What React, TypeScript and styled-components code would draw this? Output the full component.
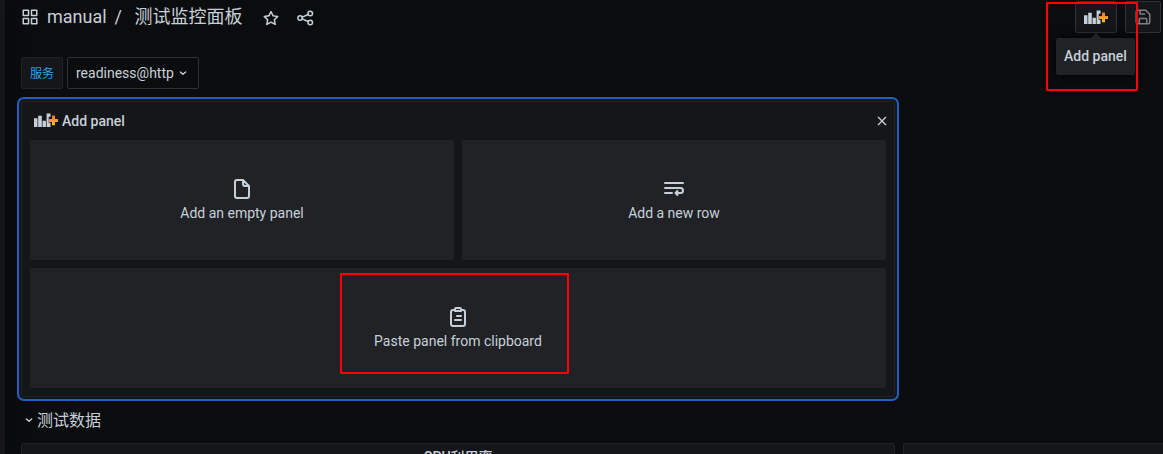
import React from 'react';
import styled, { createGlobalStyle } from 'styled-components';

const GlobalStyle = createGlobalStyle`
  *, *::before, *::after { box-sizing: border-box; }
  body {
    margin: 0;
    background: #0b0c0e;
    color: #c7d0d9;
    font-family: Roboto, "Noto Sans CJK SC", sans-serif;
    font-size: 14px;
    line-height: 20px;
    overflow: hidden;
  }
  button { font: inherit; color: inherit; padding: 0; margin: 0; }
  svg { display: block; flex: none; }
`;

const Page = styled.div`
  position: relative;
  display: flex;
  width: 1163px;
  height: 454px;
  overflow: hidden;
`;

const SideMenu = styled.div`
  flex: none;
  width: 5px;
  background: #141619;
  box-shadow: 0 0 20px #000;
`;

const Main = styled.main`
  flex: 1;
  min-width: 0;
  display: flex;
  flex-direction: column;
  padding-left: 16px;
`;

const NavBar = styled.header`
  flex: none;
  height: 57px;
  display: flex;
  align-items: flex-start;
  padding-right: 2px;
`;

const Breadcrumb = styled.div`
  display: flex;
  align-items: center;
  height: 34px;
  font-size: 18px;
  line-height: 34px;
`;

const Folder = styled.span`
  margin-left: 8px;
`;

const Separator = styled.span`
  width: 20px;
  margin-left: 8px;
`;

const NavIcon = styled.span<{ $left: number }>`
  margin-left: ${(p) => p.$left}px;
  padding-top: 2px;
`;

const Actions = styled.div`
  display: flex;
  gap: 8px;
  margin-left: auto;
`;

const ActionSlot = styled.div`
  position: relative;
`;

const NavButton = styled.button<{ $width: number; $dim?: boolean }>`
  display: flex;
  align-items: center;
  justify-content: center;
  width: ${(p) => p.$width}px;
  height: 32px;
  margin-top: 1px;
  padding-top: ${(p) => (p.$dim ? 0 : 1)}px;
  border: 1px solid #2c3235;
  border-radius: 2px;
  background: #141619;
  color: ${(p) => (p.$dim ? '#7b8087' : '#c7d0d9')};
`;

const Tooltip = styled.div`
  position: absolute;
  top: 38px;
  left: -19px;
  width: 79px;
  height: 37px;
  border-radius: 2px;
  background: #202226;
  box-shadow: 0 0 10px #000;
  font-weight: 500;
  line-height: 36px;
  text-align: center;
  white-space: nowrap;

  &::before {
    content: '';
    position: absolute;
    top: -5px;
    left: 35px;
    border: 5px solid transparent;
    border-top: 0;
    border-bottom-color: #202226;
  }
`;

const Variables = styled.div`
  flex: none;
  display: flex;
  gap: 4px;
  height: 32px;
  margin-bottom: 12px;
`;

const VariableLabel = styled.label`
  width: 42px;
  border: 1px solid #202226;
  border-radius: 2px;
  background: #141619;
  color: #33a2e5;
  font-size: 12px;
  line-height: 32px;
  text-align: center;
`;

const VariableSelect = styled.button`
  display: flex;
  align-items: center;
  gap: 1px;
  width: 132px;
  padding-left: 8px;
  border: 1px solid #2c3235;
  border-radius: 2px;
  background: #0b0c0e;
`;

const AddPanelWidget = styled.section`
  flex: none;
  width: 874px;
  height: 296px;
  border: 1px solid #202226;
  border-radius: 3px;
  background: #141619;
  box-shadow: 0 0 0 2px #141619, 0 0 0 4px #1f60c4;
`;

const WidgetHeader = styled.div`
  display: flex;
  align-items: center;
  height: 38px;
  padding: 0 4px 0 12px;
  font-weight: 500;
`;

const WidgetTitle = styled.span`
  flex: 1;
  margin-left: 4px;
`;

const CardGrid = styled.div`
  display: grid;
  grid-template-columns: 1fr 1fr;
  grid-auto-rows: 120px;
  gap: 8px;
  padding: 0 8px;
`;

const Card = styled.button<{ $wide?: boolean }>`
  grid-column: ${(p) => (p.$wide ? '1 / -1' : 'auto')};
  display: flex;
  flex-direction: column;
  align-items: center;
  padding-top: 37px;
  border: 0;
  border-radius: 2px;
  background: #202226;
`;

const CardLabel = styled.span`
  margin-top: 2px;
`;

const RowHeader = styled.div`
  flex: none;
  display: flex;
  align-items: center;
  height: 46px;
  font-size: 16px;
`;

const RowTitle = styled.span`
  padding-top: 2px;
  line-height: 24px;
`;

const PanelRow = styled.div`
  flex: none;
  display: flex;
  gap: 8px;
`;

const Panel = styled.div<{ $width: number }>`
  flex: none;
  width: ${(p) => p.$width}px;
  height: 200px;
  border: 1px solid #202226;
  border-radius: 3px;
  background: #141619;
  font-weight: 500;
  line-height: 26px;
  text-align: center;
`;

const Highlight = styled.div<{ $x: number; $y: number; $w: number; $h: number }>`
  position: absolute;
  left: ${(p) => p.$x}px;
  top: ${(p) => p.$y}px;
  width: ${(p) => p.$w}px;
  height: ${(p) => p.$h}px;
  border: 2px solid #ff0000;
  border-radius: 1px;
  pointer-events: none;
`;

interface IconProps {
  size: number;
  children: React.ReactNode;
}

const StrokeIcon = ({ size, children }: IconProps) => (
  <svg
    width={size}
    height={size}
    viewBox="0 0 24 24"
    fill="none"
    stroke="currentColor"
    strokeWidth="2"
    strokeLinecap="round"
    strokeLinejoin="round"
  >
    {children}
  </svg>
);

const AppsIcon = () => (
  <StrokeIcon size={18}>
    <path d="M3 3h7v7H3zM14 3h7v7h-7zM3 14h7v7H3zM14 14h7v7h-7z" />
  </StrokeIcon>
);

const StarIcon = () => (
  <svg width="18" height="18" viewBox="0 0 24 24" fill="currentColor">
    <path d="M22,9.67A1,1,0,0,0,21.14,9l-5.69-.83L12.9,3a1,1,0,0,0-1.8,0L8.55,8.16,2.86,9a1,1,0,0,0-.81.68,1,1,0,0,0,.25,1l4.13,4-1,5.68A1,1,0,0,0,6.9,21.44L12,18.77l5.1,2.67a.93.93,0,0,0,.46.12,1,1,0,0,0,.59-.19,1,1,0,0,0,.4-1l-1-5.68,4.13-4A1,1,0,0,0,22,9.67Zm-6.15,4a1,1,0,0,0-.29.88l.72,4.2-3.76-2a1.06,1.06,0,0,0-.94,0l-3.76,2,.72-4.2a1,1,0,0,0-.29-.88l-3-3,4.21-.61a1,1,0,0,0,.76-.55L12,5.7l1.88,3.82a1,1,0,0,0,.76.55l4.21.61Z" />
  </svg>
);

const ShareIcon = () => (
  <StrokeIcon size={18}>
    <circle cx="19" cy="6" r="3" />
    <circle cx="19" cy="18" r="3" />
    <circle cx="5.500" cy="12" r="3" />
    <path d="M8.300 10.800l7.900-3.500M8.300 13.200l7.900 3.500" />
  </StrokeIcon>
);

const SaveIcon = () => (
  <StrokeIcon size={18}>
    <path d="M3 5a2 2 0 0 1 2-2h10.6L21 8.400V19a2 2 0 0 1-2 2H5a2 2 0 0 1-2-2zM8 3v5h6M7 21v-6a1 1 0 0 1 1-1h8a1 1 0 0 1 1 1v6" />
  </StrokeIcon>
);

const ChevronIcon = () => (
  <StrokeIcon size={16}>
    <path d="M8 10.500l4 3.500 4-3.500" />
  </StrokeIcon>
);

const CloseIcon = () => (
  <StrokeIcon size={16}>
    <path d="M6.500 6.500l11 11M17.500 6.500l-11 11" />
  </StrokeIcon>
);

const FileIcon = () => (
  <StrokeIcon size={24}>
    <path d="M13 3H7a2 2 0 0 0-2 2v14a2 2 0 0 0 2 2h10a2 2 0 0 0 2-2V9zM13 3v4a2 2 0 0 0 2 2h4" />
  </StrokeIcon>
);

const WrapTextIcon = () => (
  <StrokeIcon size={24}>
    <path d="M3 6h18M3 11h15.500a2.500 2.500 0 0 1 0 5H14M3 16h7M15.500 14L13.500 16l2 2" />
  </StrokeIcon>
);

const ClipboardIcon = () => (
  <StrokeIcon size={24}>
    <path d="M8 5H7a2 2 0 0 0-2 2v12a2 2 0 0 0 2 2h10a2 2 0 0 0 2-2V7a2 2 0 0 0-2-2h-1M10 3h4a1 1 0 0 1 1 1v2H9V4a1 1 0 0 1 1-1zM11 11h4M9 15h6" />
  </StrokeIcon>
);

const PanelAddIcon = ({ id }: { id: string }) => (
  <svg width="24" height="16" viewBox="0 0 24 16">
    <defs>
      <linearGradient id={id} x1="0" y1="0" x2="0" y2="1">
        <stop offset="0" stopColor="#f2702e" />
        <stop offset="0.5" stopColor="#f79b2e" />
        <stop offset="1" stopColor="#fbc220" />
      </linearGradient>
    </defs>
    <path
      fill="#c7d0d9"
      d="M0 5.300h3.500v8.700H0zM4.200 2.800h3.600V14H4.200zM8.500 7.700h3.400V14H8.500zM12.600 .5h3.900v3.300h-1.800v6h1.800V14h-3.900z"
    />
    <path fill={`url(#${id})`} d="M18 2.600h3v3.300h3.200v3H21v3.400h-3V8.900h-3v-3h3z" />
  </svg>
);

export default function App() {
  return (
    <>
      <GlobalStyle />
      <Page>
        <SideMenu />
        <Main>
          <NavBar>
            <Breadcrumb>
              <AppsIcon />
              <Folder>manual</Folder>
              <Separator>/</Separator>
              <span>测试监控面板</span>
              <NavIcon $left={19}><StarIcon /></NavIcon>
              <NavIcon $left={16}><ShareIcon /></NavIcon>
            </Breadcrumb>
            <Actions>
              <ActionSlot>
                <NavButton $width={42}><PanelAddIcon id="plus-nav" /></NavButton>
                <Tooltip>Add panel</Tooltip>
              </ActionSlot>
              <NavButton $width={36} $dim><SaveIcon /></NavButton>
            </Actions>
          </NavBar>
          <Variables>
            <VariableLabel>服务</VariableLabel>
            <VariableSelect>
              readiness@http
              <ChevronIcon />
            </VariableSelect>
          </Variables>
          <AddPanelWidget>
            <WidgetHeader>
              <PanelAddIcon id="plus-widget" />
              <WidgetTitle>Add panel</WidgetTitle>
              <CloseIcon />
            </WidgetHeader>
            <CardGrid>
              <Card>
                <FileIcon />
                <CardLabel>Add an empty panel</CardLabel>
              </Card>
              <Card>
                <WrapTextIcon />
                <CardLabel>Add a new row</CardLabel>
              </Card>
              <Card $wide>
                <ClipboardIcon />
                <CardLabel>Paste panel from clipboard</CardLabel>
              </Card>
            </CardGrid>
          </AddPanelWidget>
          <RowHeader>
            <ChevronIcon />
            <RowTitle>测试数据</RowTitle>
          </RowHeader>
          <PanelRow>
            <Panel $width={874}>CPU利用率</Panel>
            <Panel $width={874} />
          </PanelRow>
        </Main>
        <Highlight $x={1046} $y={2} $w={92} $h={89} />
        <Highlight $x={340} $y={273} $w={229} $h={101} />
      </Page>
    </>
  );
}
